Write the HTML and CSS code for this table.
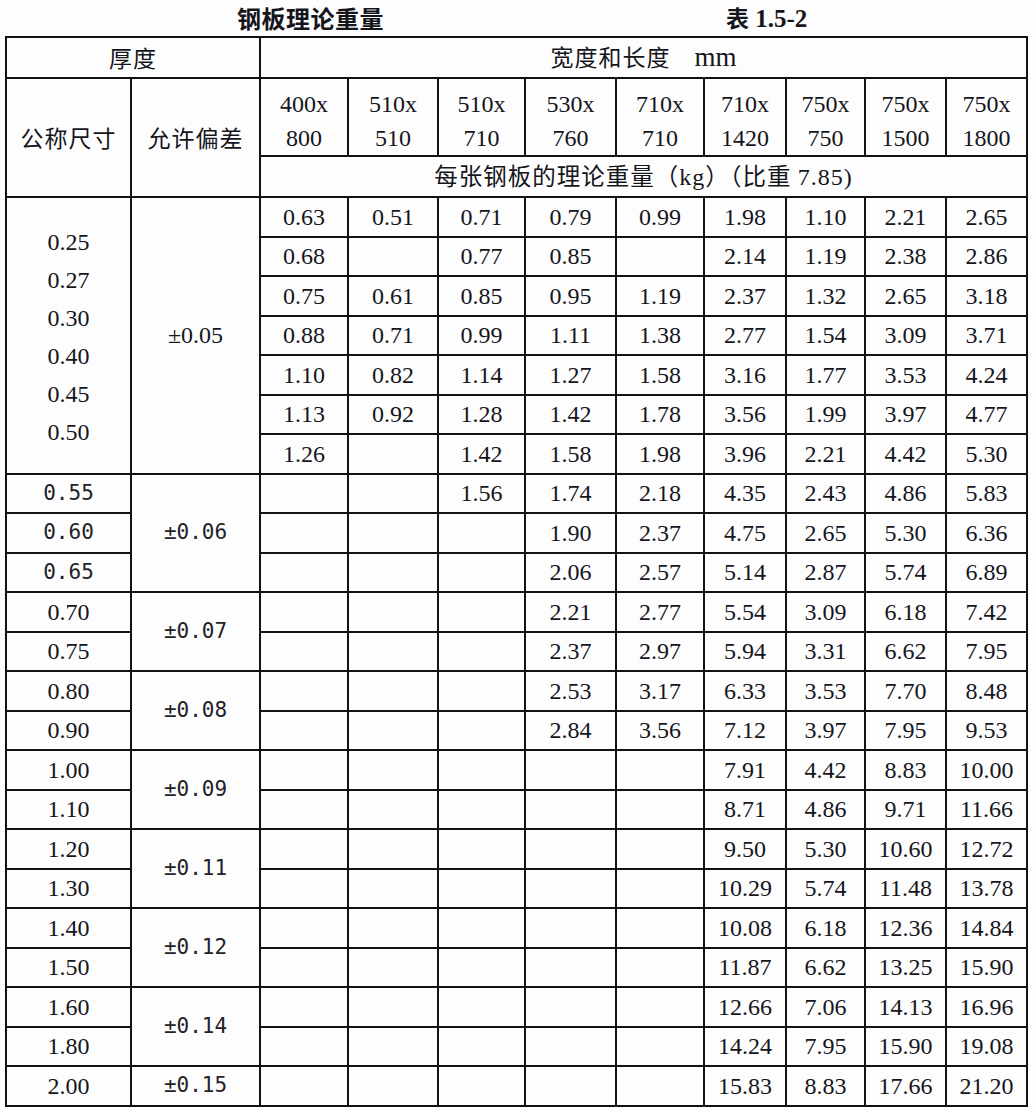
FILE: index.html
```html
<!DOCTYPE html>
<html lang="zh">
<head>
<meta charset="utf-8">
<title>钢板理论重量</title>
<link rel="stylesheet" href="styles.css">
</head>
<body>
<div class="page">
  <div class="caption">
    <span class="title">钢板理论重量</span>
    <span class="tno"><span class="tno-cjk">表</span> 1.5-2</span>
  </div>
  <table class="sheet">
    <colgroup>
      <col class="c-nom"><col class="c-tol">
      <col class="c-d1"><col class="c-d2"><col class="c-d3"><col class="c-d4"><col class="c-d5">
      <col class="c-d6"><col class="c-d7"><col class="c-d8"><col class="c-d9">
    </colgroup>
    <tr class="h1">
      <td colspan="2" class="cjk">厚度</td>
      <td colspan="9" class="cjk">宽度和长度<span class="unit">mm</span></td>
    </tr>
    <tr class="h2">
      <td rowspan="2" class="cjk">公称尺寸</td>
      <td rowspan="2" class="cjk">允许偏差</td>
      <td class="dim">400x<br>800</td>
      <td class="dim">510x<br>510</td>
      <td class="dim">510x<br>710</td>
      <td class="dim">530x<br>760</td>
      <td class="dim">710x<br>710</td>
      <td class="dim">710x<br>1420</td>
      <td class="dim">750x<br>750</td>
      <td class="dim">750x<br>1500</td>
      <td class="dim">750x<br>1800</td>
    </tr>
    <tr class="h3">
      <td colspan="9" class="cjk sub">每张钢板的理论重量（<span class="lat">kg</span>）（比重 <span class="lat">7.85)</span></td>
    </tr>

    <tr class="r">
      <td rowspan="7" class="stack">0.25<br>0.27<br>0.30<br>0.40<br>0.45<br>0.50</td>
      <td rowspan="7">±0.05</td>
      <td>0.63</td><td>0.51</td><td>0.71</td><td>0.79</td><td>0.99</td><td>1.98</td><td>1.10</td><td>2.21</td><td>2.65</td>
    </tr>
    <tr class="r"><td>0.68</td><td></td><td>0.77</td><td>0.85</td><td></td><td>2.14</td><td>1.19</td><td>2.38</td><td>2.86</td></tr>
    <tr class="r"><td>0.75</td><td>0.61</td><td>0.85</td><td>0.95</td><td>1.19</td><td>2.37</td><td>1.32</td><td>2.65</td><td>3.18</td></tr>
    <tr class="r"><td>0.88</td><td>0.71</td><td>0.99</td><td>1.11</td><td>1.38</td><td>2.77</td><td>1.54</td><td>3.09</td><td>3.71</td></tr>
    <tr class="r"><td>1.10</td><td>0.82</td><td>1.14</td><td>1.27</td><td>1.58</td><td>3.16</td><td>1.77</td><td>3.53</td><td>4.24</td></tr>
    <tr class="r"><td>1.13</td><td>0.92</td><td>1.28</td><td>1.42</td><td>1.78</td><td>3.56</td><td>1.99</td><td>3.97</td><td>4.77</td></tr>
    <tr class="r"><td>1.26</td><td></td><td>1.42</td><td>1.58</td><td>1.98</td><td>3.96</td><td>2.21</td><td>4.42</td><td>5.30</td></tr>

    <tr class="r"><td class="mono">0.55</td><td rowspan="3" class="mono">±0.06</td><td></td><td></td><td>1.56</td><td>1.74</td><td>2.18</td><td>4.35</td><td>2.43</td><td>4.86</td><td>5.83</td></tr>
    <tr class="r"><td class="mono">0.60</td><td></td><td></td><td></td><td>1.90</td><td>2.37</td><td>4.75</td><td>2.65</td><td>5.30</td><td>6.36</td></tr>
    <tr class="r"><td class="mono">0.65</td><td></td><td></td><td></td><td>2.06</td><td>2.57</td><td>5.14</td><td>2.87</td><td>5.74</td><td>6.89</td></tr>

    <tr class="r"><td>0.70</td><td rowspan="2" class="mono">±0.07</td><td></td><td></td><td></td><td>2.21</td><td>2.77</td><td>5.54</td><td>3.09</td><td>6.18</td><td>7.42</td></tr>
    <tr class="r"><td>0.75</td><td></td><td></td><td></td><td>2.37</td><td>2.97</td><td>5.94</td><td>3.31</td><td>6.62</td><td>7.95</td></tr>

    <tr class="r"><td>0.80</td><td rowspan="2" class="mono">±0.08</td><td></td><td></td><td></td><td>2.53</td><td>3.17</td><td>6.33</td><td>3.53</td><td>7.70</td><td>8.48</td></tr>
    <tr class="r"><td>0.90</td><td></td><td></td><td></td><td>2.84</td><td>3.56</td><td>7.12</td><td>3.97</td><td>7.95</td><td>9.53</td></tr>

    <tr class="r"><td>1.00</td><td rowspan="2" class="mono">±0.09</td><td></td><td></td><td></td><td></td><td></td><td>7.91</td><td>4.42</td><td>8.83</td><td>10.00</td></tr>
    <tr class="r"><td>1.10</td><td></td><td></td><td></td><td></td><td></td><td>8.71</td><td>4.86</td><td>9.71</td><td>11.66</td></tr>

    <tr class="r"><td>1.20</td><td rowspan="2" class="mono">±0.11</td><td></td><td></td><td></td><td></td><td></td><td>9.50</td><td>5.30</td><td>10.60</td><td>12.72</td></tr>
    <tr class="r"><td>1.30</td><td></td><td></td><td></td><td></td><td></td><td>10.29</td><td>5.74</td><td>11.48</td><td>13.78</td></tr>

    <tr class="r"><td>1.40</td><td rowspan="2" class="mono">±0.12</td><td></td><td></td><td></td><td></td><td></td><td>10.08</td><td>6.18</td><td>12.36</td><td>14.84</td></tr>
    <tr class="r"><td>1.50</td><td></td><td></td><td></td><td></td><td></td><td>11.87</td><td>6.62</td><td>13.25</td><td>15.90</td></tr>

    <tr class="r"><td>1.60</td><td rowspan="2" class="mono">±0.14</td><td></td><td></td><td></td><td></td><td></td><td>12.66</td><td>7.06</td><td>14.13</td><td>16.96</td></tr>
    <tr class="r"><td>1.80</td><td></td><td></td><td></td><td></td><td></td><td>14.24</td><td>7.95</td><td>15.90</td><td>19.08</td></tr>

    <tr class="r"><td>2.00</td><td class="mono">±0.15</td><td></td><td></td><td></td><td></td><td></td><td>15.83</td><td>8.83</td><td>17.66</td><td>21.20</td></tr>
  </table>
</div>
</body>
</html>
```

FILE: styles.css
```css
html, body {
  margin: 0;
  padding: 0;
  background: #fdfdfd;
}

body {
  color: #15151c;
  font-family: "Liberation Serif", "Times New Roman", serif;
}

.page {
  padding-left: 5px;
}

.caption {
  height: 36px;
  display: flex;
  align-items: center;
}

.title {
  margin-left: 232px;
  font-family: "Noto Sans CJK SC", sans-serif;
  font-weight: 700;
  font-size: 24px;
  letter-spacing: 0.5px;
  line-height: 1;
}

.tno {
  margin-left: 342px;
  font-family: "Liberation Serif", serif;
  font-weight: 700;
  font-size: 25px;
  line-height: 1;
}

.tno-cjk {
  font-family: "Noto Sans CJK SC", sans-serif;
  font-weight: 700;
  font-size: 23px;
}

.sheet {
  border-collapse: collapse;
  table-layout: fixed;
  width: 1022px;
}

.c-nom { width: 125px; }
.c-tol { width: 129px; }
.c-d1 { width: 88px; }
.c-d2 { width: 90px; }
.c-d3 { width: 87px; }
.c-d4 { width: 91px; }
.c-d5 { width: 88px; }
.c-d6 { width: 82px; }
.c-d7 { width: 79px; }
.c-d8 { width: 81px; }
.c-d9 { width: 81px; }

.sheet td {
  border: 2px solid #121212;
  padding: 0;
  text-align: center;
  vertical-align: middle;
  font-size: 24px;
  line-height: 1;
  white-space: nowrap;
}

.h1 { height: 41px; }
.h2 { height: 77px; }
.h3 { height: 41px; }
.r { height: 39.5px; }

.sheet td.cjk {
  font-family: "Noto Sans CJK SC", sans-serif;
  font-size: 23px;
  letter-spacing: 1px;
}

.sheet td.sub {
  font-size: 23.5px;
  letter-spacing: 1px;
}

.unit {
  font-family: "Liberation Serif", serif;
  font-size: 27px;
  margin-left: 24px;
  letter-spacing: 0;
}

.lat {
  font-family: "Liberation Serif", serif;
  font-size: 24px;
}

.sheet td.dim {
  line-height: 34px;
  padding-top: 8px;
  vertical-align: top;
}

.sheet td.stack {
  line-height: 38px;
  padding-top: 4px;
}

.sheet td.mono {
  font-family: "DejaVu Sans Mono", monospace;
  font-size: 21px;
  color: #222228;
}
```
